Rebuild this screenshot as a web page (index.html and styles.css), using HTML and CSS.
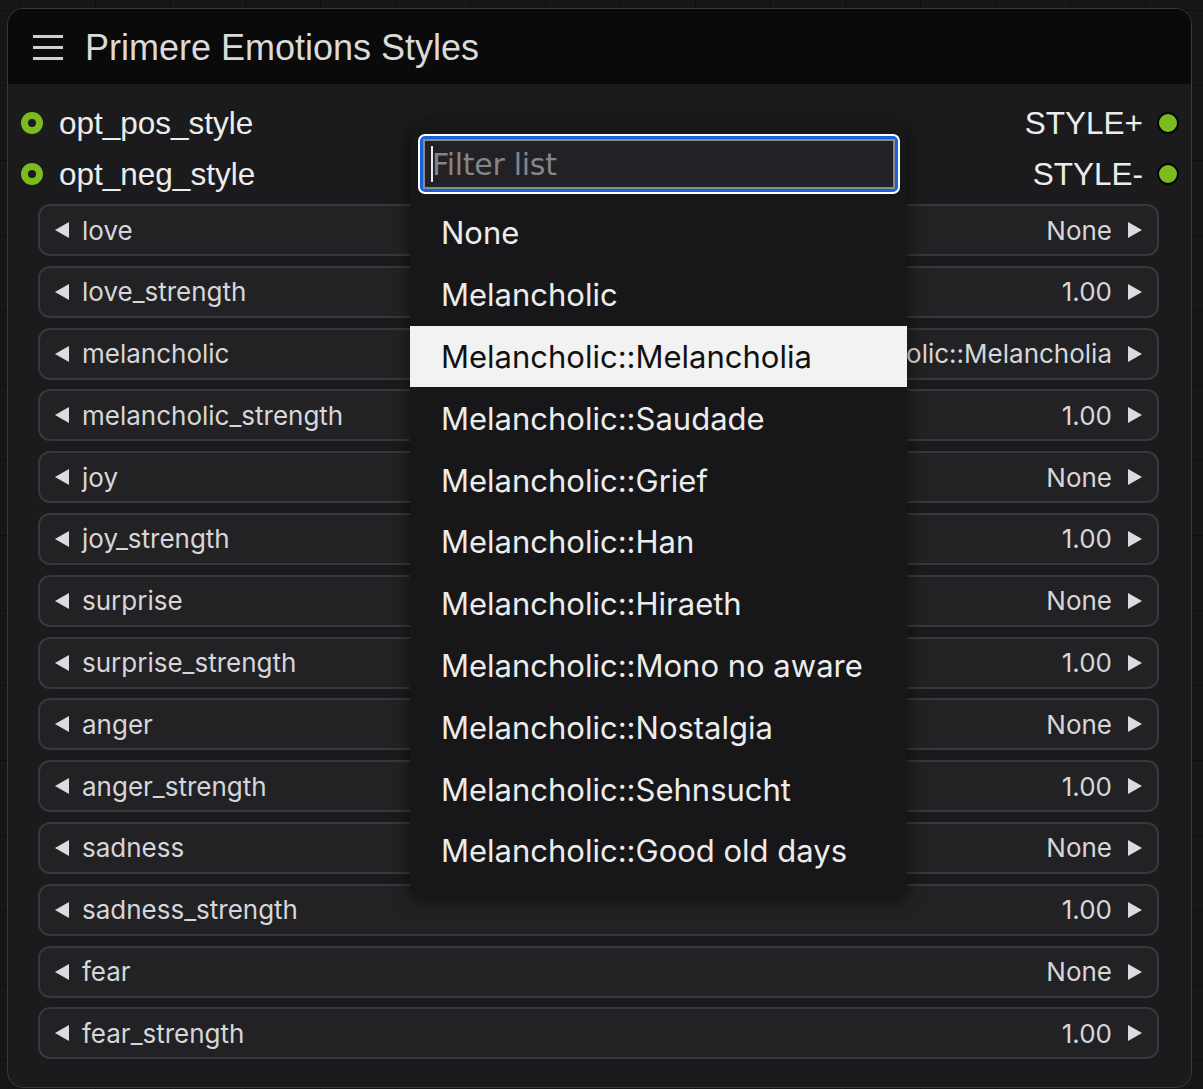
FILE: index.html
```html
<!DOCTYPE html>
<html>
<head>
<meta charset="utf-8">
<link rel="stylesheet" href="styles.css">
</head>
<body>
<div class="canvas">
  <div class="node">
    <div class="titlebar">
      <svg class="menu" width="30" height="26" viewBox="0 0 30 26"><rect x="0" y="1" width="30" height="3" fill="#cfcfcf"/><rect x="0" y="12" width="30" height="3" fill="#cfcfcf"/><rect x="0" y="23" width="30" height="3" fill="#cfcfcf"/></svg>
      <span class="title">Primere Emotions Styles</span>
    </div>
    <div class="body">
      <div class="slots">
        <div class="slot"><span class="dot ring"></span><span class="slabel">opt_pos_style</span><span class="spacer"></span><span class="slabel">STYLE+</span><span class="dot out"></span></div>
        <div class="slot"><span class="dot ring"></span><span class="slabel">opt_neg_style</span><span class="spacer"></span><span class="slabel">STYLE-</span><span class="dot out"></span></div>
      </div>
      <div class="widgets">
        <div class="w"><span class="tl"></span><span class="wn">love</span><span class="wv">None</span><span class="tr"></span></div>
        <div class="w"><span class="tl"></span><span class="wn">love_strength</span><span class="wv">1.00</span><span class="tr"></span></div>
        <div class="w"><span class="tl"></span><span class="wn">melancholic</span><span class="wv">Melancholic::Melancholia</span><span class="tr"></span></div>
        <div class="w"><span class="tl"></span><span class="wn">melancholic_strength</span><span class="wv">1.00</span><span class="tr"></span></div>
        <div class="w"><span class="tl"></span><span class="wn">joy</span><span class="wv">None</span><span class="tr"></span></div>
        <div class="w"><span class="tl"></span><span class="wn">joy_strength</span><span class="wv">1.00</span><span class="tr"></span></div>
        <div class="w"><span class="tl"></span><span class="wn">surprise</span><span class="wv">None</span><span class="tr"></span></div>
        <div class="w"><span class="tl"></span><span class="wn">surprise_strength</span><span class="wv">1.00</span><span class="tr"></span></div>
        <div class="w"><span class="tl"></span><span class="wn">anger</span><span class="wv">None</span><span class="tr"></span></div>
        <div class="w"><span class="tl"></span><span class="wn">anger_strength</span><span class="wv">1.00</span><span class="tr"></span></div>
        <div class="w"><span class="tl"></span><span class="wn">sadness</span><span class="wv">None</span><span class="tr"></span></div>
        <div class="w"><span class="tl"></span><span class="wn">sadness_strength</span><span class="wv">1.00</span><span class="tr"></span></div>
        <div class="w"><span class="tl"></span><span class="wn">fear</span><span class="wv">None</span><span class="tr"></span></div>
        <div class="w"><span class="tl"></span><span class="wn">fear_strength</span><span class="wv">1.00</span><span class="tr"></span></div>
      </div>
    </div>
  </div>
  <div class="dropdown">
    <div class="filter"><div class="filter-in"><span class="caret"></span><span class="ph">Filter list</span></div></div>
    <div class="items">
      <div class="item">None</div>
      <div class="item">Melancholic</div>
      <div class="item sel">Melancholic::Melancholia</div>
      <div class="item">Melancholic::Saudade</div>
      <div class="item">Melancholic::Grief</div>
      <div class="item">Melancholic::Han</div>
      <div class="item">Melancholic::Hiraeth</div>
      <div class="item">Melancholic::Mono no aware</div>
      <div class="item">Melancholic::Nostalgia</div>
      <div class="item">Melancholic::Sehnsucht</div>
      <div class="item">Melancholic::Good old days</div>
    </div>
  </div>
</div>
</body>
</html>
```

FILE: styles.css
```css
html, body {
  margin: 0;
  padding: 0;
  width: 1203px;
  height: 1089px;
  overflow: hidden;
  background-color: #161617;
  background-image:
    linear-gradient(#0e0e0f 1px, transparent 1px),
    linear-gradient(90deg, #0e0e0f 1px, transparent 1px);
  background-size: 75px 75px;
  background-position: 20px 10px;
}
.canvas {
  position: relative;
  width: 1203px;
  height: 1089px;
  padding: 8px 11px 0 7px;
  box-sizing: border-box;
}
.node {
  width: 1185px;
  height: 1080px;
  box-sizing: border-box;
  border: 1px solid #3a3a3c;
  border-radius: 16px;
  background: #1b1b1d;
  overflow: hidden;
  display: flex;
  flex-direction: column;
}
.titlebar {
  height: 75px;
  flex: none;
  background: #0a0a0b;
  display: flex;
  align-items: center;
  padding-left: 25px;
  gap: 23px;
}
.menu { display: block; margin-top: 1px; }
.title {
  font-family: "Liberation Sans", Arial, sans-serif;
  font-size: 36px;
  color: #dadada;
  margin-top: 3px;
  margin-left: -1px;
}
.body {
  flex: 1;
  display: flex;
  flex-direction: column;
  padding: 13px 32px 0 13px;
}
.slots { display: flex; flex-direction: column; margin-bottom: 5px; }
.slot {
  height: 51px;
  display: flex;
  align-items: center;
}
.slot .spacer { flex: 1; }
.dot {
  width: 22px;
  height: 22px;
  border-radius: 50%;
  box-sizing: border-box;
  flex: none;
}
.dot.ring {
  border: 7px solid #7cbb1f;
  background: #1b1b1d;
  margin-right: 16px;
}
.dot.out {
  background: #7cbb1f;
  border: 2px solid #050505;
  margin-left: 14px;
  margin-right: -20px;
}
.slabel {
  font-family: "Liberation Sans", Arial, sans-serif;
  font-size: 31.5px;
  color: #ececec;
  margin-top: 2px;
}
.widgets {
  display: flex;
  flex-direction: column;
  gap: 9.8px;
  padding-left: 17px;
}
.w {
  height: 52px;
  box-sizing: border-box;
  border: 2px solid #38383c;
  border-radius: 12px;
  background: #222225;
  display: flex;
  align-items: center;
  padding: 0 15px 0 15px;
  font-family: Inter, "Noto Sans", sans-serif;
  font-size: 26px;
  color: #d6d6da;
}
.tl {
  width: 0; height: 0;
  border-top: 8px solid transparent;
  border-bottom: 8px solid transparent;
  border-right: 14px solid #dcdce0;
  margin-right: 13px;
}
.tr {
  width: 0; height: 0;
  border-top: 8px solid transparent;
  border-bottom: 8px solid transparent;
  border-left: 14px solid #dcdce0;
  margin-left: 16px;
}
.wn { flex: 1; white-space: nowrap; }
.wv { white-space: nowrap; }
.dropdown {
  position: absolute;
  left: 410px;
  top: 122px;
  width: 497px;
  height: 775px;
  box-sizing: border-box;
  background: #171719;
  border-radius: 12px;
  box-shadow: 0 4px 18px rgba(0,0,0,0.55);
  padding: 12px 0 0 0;
}
.filter {
  margin: 0 7px 0 8px;
  height: 60px;
  box-sizing: border-box;
  border: 2px solid #ffffff;
  border-radius: 7px;
  background: #1565d8;
  padding: 3px;
}
.filter-in {
  height: 100%;
  box-sizing: border-box;
  border: 2px solid #8a8a8a;
  background: #222226;
  display: flex;
  align-items: center;
  padding-left: 6px;
}
.caret {
  width: 2px;
  height: 36px;
  background: #e8e8e8;
  margin-right: -1px;
  flex: none;
}
.ph {
  font-family: "DejaVu Sans", Verdana, sans-serif;
  font-size: 30px;
  color: #858585;
  letter-spacing: -0.3px;
}
.items {
  margin-top: 8px;
  display: flex;
  flex-direction: column;
}
.item {
  height: 61.8px;
  display: flex;
  align-items: center;
  padding-left: 31px;
  font-family: Inter, "Noto Sans", sans-serif;
  font-size: 31px;
  color: #ececec;
  white-space: nowrap;
}
.item.sel {
  background: #f2f2f2;
  color: #111111;
}
```
